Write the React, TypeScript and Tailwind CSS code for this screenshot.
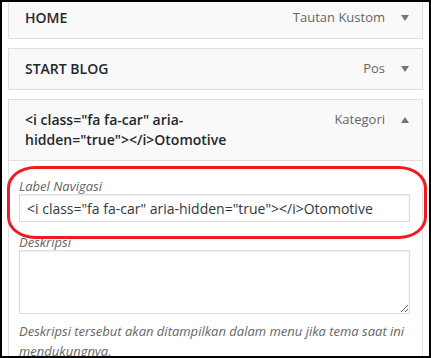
import React from "react";

function Arrow({ up }: { up?: boolean }) {
  return (
    <svg width="8" height="6" viewBox="0 0 8 6" className="shrink-0">
      {up ? (
        <polygon points="0,6 8,6 4,0" fill="#72777c" />
      ) : (
        <polygon points="0,0 8,0 4,6" fill="#72777c" />
      )}
    </svg>
  );
}

function ItemHeader({
  title,
  type,
  open
}: {
  title: React.ReactNode;
  type: string;
  open?: boolean;
}) {
  return (
    <div className="flex items-start justify-between pl-[16px] pr-[13px] py-[10px] bg-[#f9f9f9]">
      <span className="text-[14px] leading-[20px] font-semibold text-[#23282d] whitespace-nowrap">
        {title}
      </span>
      <div className="flex items-center gap-[16px] h-[20px]">
        <span className="text-[13px] text-[#666]">{type}</span>
        <Arrow up={open} />
      </div>
    </div>
  );
}

export default function App() {
  return (
    <div
      className="relative w-[431px] h-[358px] overflow-hidden bg-white border-2 border-black"
      style={{ fontFamily: '"Open Sans", "Liberation Sans", sans-serif' }}
    >
      <div className="flex flex-col gap-[9px] px-[6px] mt-[-5px]">
        <div className="border border-[#dfdfdf]">
          <ItemHeader title="HOME" type="Tautan Kustom" />
        </div>
        <div className="border border-[#dfdfdf]">
          <ItemHeader title="START BLOG" type="Pos" />
        </div>
        <div className="border border-[#dfdfdf]">
          <ItemHeader
            title={
              <>
                {'<i class="fa fa-car" aria-'}
                <br />
                {'hidden="true"></i>Otomotive'}
              </>
            }
            type="Kategori"
            open
          />
          <div className="border-t border-[#dfdfdf] bg-white pl-[10px] pr-[12px] pt-[17px] pb-[10px]">
            <label className="block text-[13px] leading-[16px] italic text-[#666]">
              Label Navigasi
            </label>
            <input
              type="text"
              readOnly
              defaultValue={'<i class="fa fa-car" aria-hidden="true"></i>Otomotive'}
              className="block w-full h-[28px] px-[7px] border border-[#ddd] text-[14px] text-[#32373c] outline-none shadow-[inset_0_1px_2px_rgba(0,0,0,0.07)]"
              style={{ fontFamily: '"Open Sans", "Liberation Sans", sans-serif' }}
            />
            <label className="block mt-[12px] text-[13px] leading-[16px] italic text-[#666]">
              Deskripsi
            </label>
            <textarea
              readOnly
              className="block w-full h-[64px] border border-[#ddd] outline-none shadow-[inset_0_1px_2px_rgba(0,0,0,0.07)]"
            />
            <p className="mt-[7px] text-[13px] leading-[20px] italic text-[#666]">
              Deskripsi tersebut akan ditampilkan dalam menu jika tema saat ini mendukungnya.
            </p>
          </div>
        </div>
      </div>
      <div className="absolute left-[5px] top-[164px] w-[420px] h-[73px] border-[3px] border-[#ed1c24] rounded-[28px/22px]" />
    </div>
  );
}
